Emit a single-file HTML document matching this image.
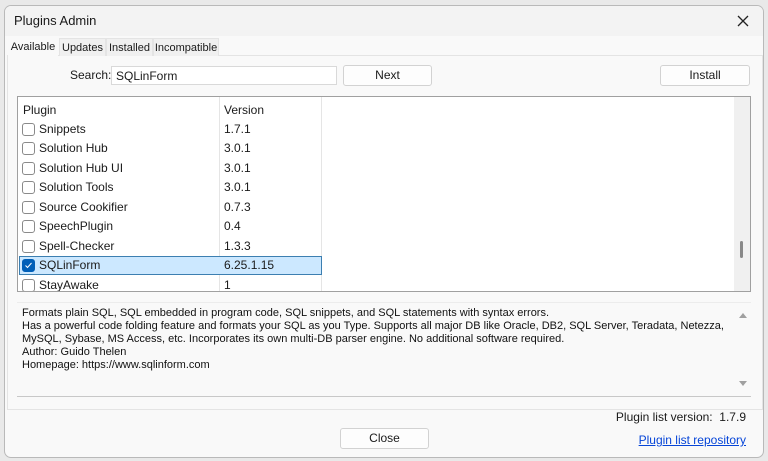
<!DOCTYPE html>
<html><head><style>
*{box-sizing:border-box;margin:0;padding:0}
body{width:768px;height:461px;background:#e9e9e9;font-family:"Liberation Sans",sans-serif;font-size:12px;color:#1a1a1a;position:relative;overflow:hidden}
.win{position:absolute;left:4px;top:5px;width:760px;height:453px;background:#f9f9f9;border:1px solid #b9b9b9;border-radius:7px;overflow:hidden}
.title{position:absolute;left:0;top:0;width:100%;height:30px;background:#f3f3f3;}
.title span{position:absolute;left:9px;top:7px;font-size:13px}
.x{position:absolute;right:14px;top:9px}
.abs{position:absolute}
.tab{position:absolute;top:32px;height:18px;font-size:11px;padding:3px 0;text-align:center;border:1px solid #e4e4e4;border-bottom:none;background:#f0f0f0}
.btn{position:absolute;background:#fdfdfd;border:1px solid #d2d2d2;border-radius:3px;text-align:center;font-size:12px;line-height:19px}
.list{position:absolute;left:12px;top:90px;width:734px;height:196px;background:#fff;border:1px solid #a0a0a0;overflow:hidden}
.row{position:absolute;left:0;height:19px;width:300px}
.cb{position:absolute;left:4px;top:3px;width:13px;height:13px;border:1px solid #8a8a8a;border-radius:3px;background:#fff}
.nm{position:absolute;left:21px;top:2px}
.vr{position:absolute;left:206px;top:2px}
.desc{position:absolute;left:12px;top:296px;width:734px;height:95px;background:#f9f9f9;border-top:1px solid #ececec;border-bottom:1px solid #c8c8c8;font-size:11px;line-height:13px;padding:4px 0 0 5px;color:#111}
</style></head><body>
<div class="win">
 <div class="title"><span>Plugins Admin</span>
 <svg class="x" width="12" height="12" viewBox="0 0 12 12"><path d="M1 1L11 11M11 1L1 11" stroke="#222" stroke-width="1.3"/></svg></div>
 <div class="abs" style="left:2px;top:49px;width:756px;height:355px;border:1px solid #e4e4e4;background:#f9f9f9"></div>
 <div class="tab" style="left:3px;top:30px;width:50px;height:20px;background:#f9f9f9;border-color:#f9f9f9;padding-top:4px">Available</div>
 <div class="tab" style="left:54px;width:47px">Updates</div>
 <div class="tab" style="left:101px;width:47px">Installed</div>
 <div class="tab" style="left:148px;width:66px">Incompatible</div>
 <div class="abs" style="left:65px;top:62px">Search:</div>
 <div class="abs" style="left:106px;top:60px;width:226px;height:19px;background:#fff;border:1px solid #d9d9d9;padding:2px 4px">SQLinForm</div>
 <div class="btn" style="left:338px;top:59px;width:89px;height:21px">Next</div>
 <div class="btn" style="left:655px;top:59px;width:90px;height:21px">Install</div>
 <div class="list">
  <div class="abs" style="left:201px;top:0;width:1px;height:200px;background:#e5e5e5"></div>
  <div class="abs" style="left:303px;top:0;width:1px;height:200px;background:#e5e5e5"></div>
  <div class="abs" style="left:716px;top:0;width:17px;height:196px;background:#f0f0f0"></div>
  <div class="abs" style="left:722px;top:144px;width:3px;height:17px;background:#888;border-radius:2px"></div>
  <div class="row" style="top:4px"><span class="abs" style="left:5px;top:2px">Plugin</span><span class="vr">Version</span></div>
  <div class="row" style="top:23px"><div class="cb"></div><span class="nm">Snippets</span><span class="vr">1.7.1</span></div>
  <div class="row" style="top:42px"><div class="cb"></div><span class="nm">Solution Hub</span><span class="vr">3.0.1</span></div>
  <div class="row" style="top:62px"><div class="cb"></div><span class="nm">Solution Hub UI</span><span class="vr">3.0.1</span></div>
  <div class="row" style="top:81px"><div class="cb"></div><span class="nm">Solution Tools</span><span class="vr">3.0.1</span></div>
  <div class="row" style="top:101px"><div class="cb"></div><span class="nm">Source Cookifier</span><span class="vr">0.7.3</span></div>
  <div class="row" style="top:120px"><div class="cb"></div><span class="nm">SpeechPlugin</span><span class="vr">0.4</span></div>
  <div class="row" style="top:140px"><div class="cb"></div><span class="nm">Spell-Checker</span><span class="vr">1.3.3</span></div>
  <div class="row" style="top:159px;left:1px;width:303px;background:#cce8ff;border:1px solid #3c7fb1"><div class="cb" style="left:2px;top:2px;background:#005fb8;border-color:#005fb8"><svg width="11" height="11" viewBox="0 0 11 11" style="position:absolute;left:0;top:0"><path d="M2.5 5.5L4.5 7.5L8.5 3" stroke="#fff" stroke-width="1" fill="none"/></svg></div><span class="nm" style="left:19px;top:1px">SQLinForm</span><span class="vr" style="left:204px;top:1px">6.25.1.15</span></div>
  <div class="row" style="top:179px"><div class="cb"></div><span class="nm">StayAwake</span><span class="vr">1</span></div>
 </div>
 <div class="desc">Formats plain SQL, SQL embedded in program code, SQL snippets, and SQL statements with syntax errors.<br>Has a powerful code folding feature and formats your SQL as you Type. Supports all major DB like Oracle, DB2, SQL Server, Teradata, Netezza,<br>MySQL, Sybase, MS Access, etc. Incorporates its own multi-DB parser engine. No additional software required.<br>Author: Guido Thelen<br>Homepage: https://www.sqlinform.com
  <div class="abs" style="right:4px;top:10px;width:0;height:0;border-left:4px solid transparent;border-right:4px solid transparent;border-bottom:5px solid #a0a0a0"></div>
  <div class="abs" style="right:4px;bottom:10px;width:0;height:0;border-left:4px solid transparent;border-right:4px solid transparent;border-top:5px solid #a0a0a0"></div>
 </div>
 <div class="abs" style="right:17px;top:404px">Plugin list version:&nbsp;&nbsp;1.7.9</div>
 <div class="abs" style="right:17px;top:427px;color:#0645d8;text-decoration:underline">Plugin list repository</div>
 <div class="btn" style="left:335px;top:422px;width:89px;height:21px">Close</div>
</div>
</body></html>
